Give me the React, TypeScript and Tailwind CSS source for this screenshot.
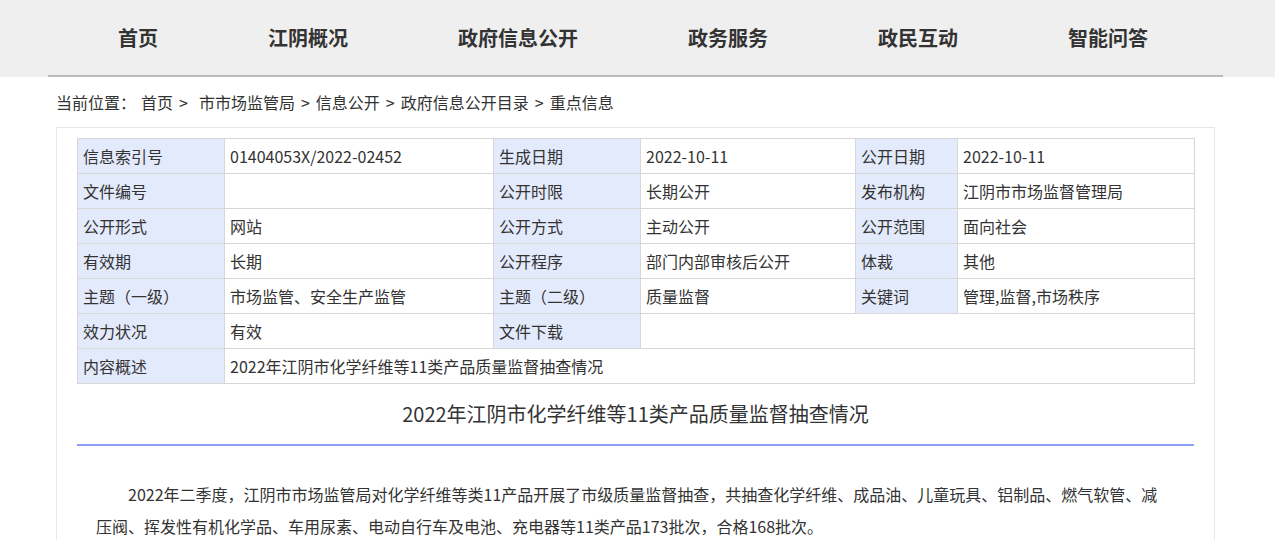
const navItems = ['首页', '江阴概况', '政府信息公开', '政务服务', '政民互动', '智能问答']

type Cell = { text: string; label?: boolean; span?: number }

const rows: Cell[][] = [
  [
    { text: '信息索引号', label: true },
    { text: '01404053X/2022-02452' },
    { text: '生成日期', label: true },
    { text: '2022-10-11' },
    { text: '公开日期', label: true },
    { text: '2022-10-11' },
  ],
  [
    { text: '文件编号', label: true },
    { text: '' },
    { text: '公开时限', label: true },
    { text: '长期公开' },
    { text: '发布机构', label: true },
    { text: '江阴市市场监督管理局' },
  ],
  [
    { text: '公开形式', label: true },
    { text: '网站' },
    { text: '公开方式', label: true },
    { text: '主动公开' },
    { text: '公开范围', label: true },
    { text: '面向社会' },
  ],
  [
    { text: '有效期', label: true },
    { text: '长期' },
    { text: '公开程序', label: true },
    { text: '部门内部审核后公开' },
    { text: '体裁', label: true },
    { text: '其他' },
  ],
  [
    { text: '主题（一级）', label: true },
    { text: '市场监管、安全生产监管' },
    { text: '主题（二级）', label: true },
    { text: '质量监督' },
    { text: '关键词', label: true },
    { text: '管理,监督,市场秩序' },
  ],
  [
    { text: '效力状况', label: true },
    { text: '有效' },
    { text: '文件下载', label: true },
    { text: '', span: 3 },
  ],
  [
    { text: '内容概述', label: true },
    { text: '2022年江阴市化学纤维等11类产品质量监督抽查情况', span: 5 },
  ],
]

const crumbs = ['首页', '市市场监管局', '信息公开', '政府信息公开目录', '重点信息']

export default function App() {
  return (
    <div className="min-h-[540px] bg-white text-[#333] font-['Microsoft_YaHei','Noto_Sans_CJK_SC',sans-serif]">
      {/* top nav */}
      <div className="h-[77px] bg-[#efefef]">
        <div className="ml-[48px] w-[1175px] h-full border-b-2 border-[#bbbbbb] flex items-center pl-[70px] gap-[110px]">
          {navItems.map((item) => (
            <a key={item} className="text-[20px] font-bold text-[#333] leading-none whitespace-nowrap">
              {item}
            </a>
          ))}
        </div>
      </div>

      {/* breadcrumb */}
      <div className="ml-[56px] mt-[13px] mb-[13px] h-[24px] leading-[24px] text-[16px] whitespace-nowrap flex">
        <span>当前位置：</span>
        <span className="ml-[5px]">{crumbs[0]}</span>
        {crumbs.slice(1).map((c, i) => (
          <span key={c} className="flex">
            <span className={i === 0 ? 'ml-[6px] mr-[11px]' : 'mx-[6px]'}>&gt;</span>
            {c}
          </span>
        ))}
      </div>

      {/* content box */}
      <div className="ml-[56px] w-[1159px] border border-[#e6e6e6] px-[20px] pt-[10px] pb-[40px]">
        <table className="w-[1117px] table-fixed border-collapse text-[16px]">
          <colgroup>
            <col className="w-[147px]" />
            <col className="w-[269px]" />
            <col className="w-[147px]" />
            <col className="w-[215px]" />
            <col className="w-[102px]" />
            <col className="w-[237px]" />
          </colgroup>
          <tbody>
            {rows.map((row, r) => (
              <tr key={r} className="h-[35px]">
                {row.map((cell, c) => (
                  <td
                    key={c}
                    colSpan={cell.span}
                    className={`border border-[#d7d7d7] px-[5px] py-0 leading-[20px] whitespace-nowrap ${
                      cell.label ? 'bg-[#e3eafc]' : 'bg-white'
                    }`}
                  >
                    {cell.text}
                  </td>
                ))}
              </tr>
            ))}
          </tbody>
        </table>

        <h1 className="mt-[17px] text-center text-[20px] leading-[26px] font-normal">
          2022年江阴市化学纤维等11类产品质量监督抽查情况
        </h1>
        <div className="mt-[17px] h-[2px] bg-[#8c9ff5]" />

        <p className="mt-[32px] pl-[19px] w-[1093px] text-[16px] leading-[32px] indent-[32px]">
          2022年二季度，江阴市市场监管局对化学纤维等类11产品开展了市级质量监督抽查，共抽查化学纤维、成品油、儿童玩具、铝制品、燃气软管、减压阀、挥发性有机化学品、车用尿素、电动自行车及电池、充电器等11类产品173批次，合格168批次。
        </p>
      </div>
    </div>
  )
}
